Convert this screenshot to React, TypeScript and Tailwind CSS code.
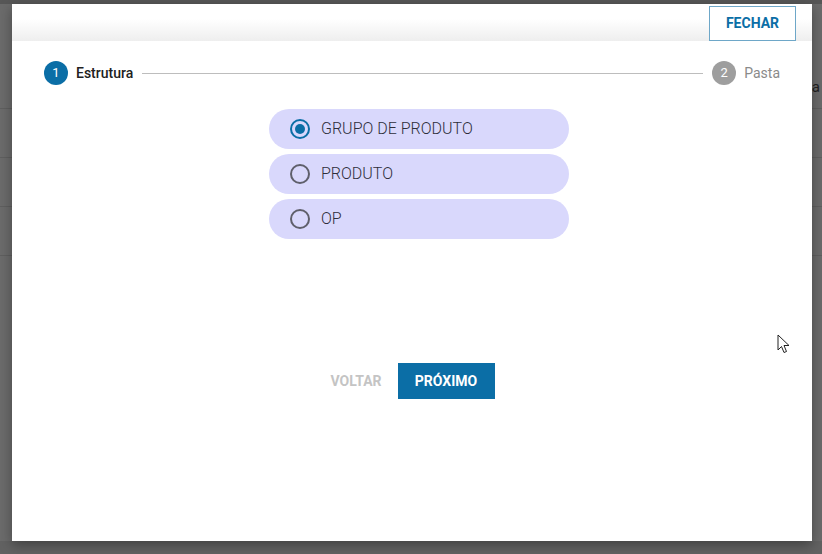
import { useState } from 'react';

const options = ['GRUPO DE PRODUTO', 'PRODUTO', 'OP'];

function Radio({ checked }: { checked: boolean }) {
  return (
    <span
      className={`flex items-center justify-center w-[20px] h-[20px] rounded-full border-2 ${
        checked ? 'border-[#0b6ea6]' : 'border-[#5f5f6b]'
      }`}
    >
      {checked && <span className="w-[10px] h-[10px] rounded-full bg-[#0b6ea6]" />}
    </span>
  );
}

function Cursor() {
  return (
    <svg width="14" height="21" viewBox="0 0 14 21" className="absolute left-[777px] top-[334px]">
      <path d="M1 1 L1 16 L4.5 12.5 L7 18.5 L9.5 17.5 L7 11.5 L12 11.5 Z" fill="#fff" stroke="#222" strokeWidth="1" strokeLinejoin="round" />
    </svg>
  );
}

export default function App() {
  const [selected, setSelected] = useState(0);

  return (
    <div className="relative w-[822px] h-[554px] overflow-hidden bg-[#6b6b6b] font-['Roboto',sans-serif]">
      {/* page behind the overlay */}
      <div className="flex flex-col">
        <div className="h-[4px] bg-[#575757]" />
        <div className="h-[104px] flex items-end justify-end pb-[10px] pr-[2px] text-[15px] text-[#222]">a</div>
        {[0, 1, 2, 3].map((i) => (
          <div key={i} className="h-[49px] border-t border-[#5f5f5f]" />
        ))}
      </div>
      <div className="absolute left-0 right-0 bottom-0 h-[13px] bg-[#626262]" />

      {/* dialog */}
      <div className="absolute left-[12px] top-[4px] w-[800px] h-[537px] bg-white flex flex-col shadow-[0_4px_12px_rgba(0,0,0,0.35)]">
        <div className="h-[37px] flex justify-end items-start pr-[16px] pt-[2px] bg-gradient-to-b from-white from-40% to-[#eeeeee]">
          <button className="h-[35px] w-[87px] border border-[#6ea7c8] bg-white text-[#0b6ea6] text-[14px] font-bold">
            FECHAR
          </button>
        </div>

        <div className="flex items-center pl-[32px] pr-[32px] pt-[20px]">
          <span className="w-[24px] h-[24px] rounded-full bg-[#0b6ea6] text-white text-[13px] flex items-center justify-center">1</span>
          <span className="ml-[8px] text-[14px] font-medium text-[#212121]">Estrutura</span>
          <div className="flex-1 h-px bg-[#bdbdbd] mx-[9px]" />
          <span className="w-[24px] h-[24px] rounded-full bg-[#9e9e9e] text-white text-[13px] flex items-center justify-center">2</span>
          <span className="ml-[8px] text-[14px] text-[#8a8a8a]">Pasta</span>
        </div>

        <div className="flex flex-col items-center gap-[5px] mt-[24px] pl-[14px]">
          {options.map((opt, i) => (
            <div
              key={opt}
              onClick={() => setSelected(i)}
              className="w-[300px] h-[40px] rounded-full bg-[#d9d8fc] flex items-center pl-[21px] gap-[11px] cursor-pointer"
            >
              <Radio checked={selected === i} />
              <span className="text-[16px] font-light text-[#2e2e3a]">{opt}</span>
            </div>
          ))}
        </div>

        <div className="flex justify-center items-center gap-[16px] mt-[124px] pl-[1px]">
          <button className="text-[14px] font-bold text-[#c4c4c4]">VOLTAR</button>
          <button className="h-[36px] w-[97px] bg-[#0b6ea6] text-white text-[14px] font-bold">PRÓXIMO</button>
        </div>
      </div>

      <Cursor />
    </div>
  );
}
